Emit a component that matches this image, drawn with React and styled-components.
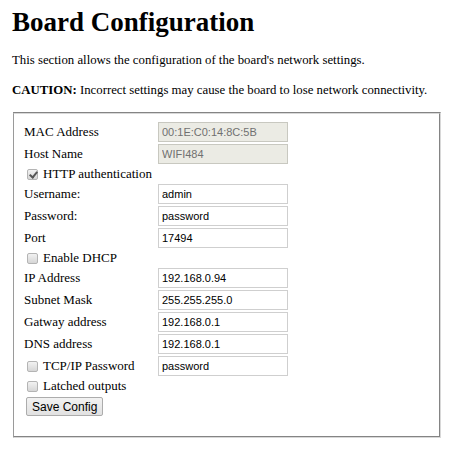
import styled, { createGlobalStyle } from 'styled-components';

const GlobalStyle = createGlobalStyle`
	body {
		margin: 0;
		background: #fff;
		color: #000;
		font-family: 'Liberation Serif', 'Times New Roman', serif;
		font-size: 13px;
	}
`;

const Page = styled.div`
	padding: 0 11px 0 12px;
`;

const Title = styled.h1`
	font-size: 27px;
	font-weight: bold;
	margin: 6px 0 0;
	line-height: 32px;
`;

const Text = styled.p`
	margin: 14px 0 0;
	font-size: 12.8px;
	line-height: 16px;

	& + & {
		margin-top: 14px;
	}
`;

const Fieldset = styled.fieldset`
	margin: 14px 0 0 1px;
	padding: 8px 10px 20px 10px;
	border: 2px groove #d8d8d8;
	border-left-width: 1px;
	border-left-style: solid;
	border-left-color: #9a9a9a;
`;

const Form = styled.div`
	display: grid;
	grid-template-columns: 134px 130px;
	row-gap: 2px;
	align-items: center;
`;

const Label = styled.label`
	line-height: 20px;
	white-space: nowrap;
`;

const Field = styled.input`
	box-sizing: border-box;
	width: 130px;
	height: 20px;
	padding: 0 3px;
	border: 1px solid ${(p) => (p.disabled ? '#c8c8c0' : '#cfcfcf')};
	background: ${(p) => (p.disabled ? '#ebebe4' : '#fff')};
	color: ${(p) => (p.disabled ? '#707070' : '#000')};
	font-family: 'Liberation Sans', Arial, sans-serif;
	font-size: 11px;
	outline: none;
`;

const CheckRow = styled.label`
	grid-column: ${(p) => (p.$span ? '1 / span 2' : 'auto')};
	display: flex;
	align-items: center;
	gap: 5px;
	padding-left: 3px;
	line-height: 16px;
	white-space: nowrap;
`;

const Box = styled.span`
	position: relative;
	width: 11px;
	height: 11px;
	box-sizing: border-box;
	border: 1px solid #b4b4b4;
	border-radius: 2px;
	background: linear-gradient(#f2f2f2, #d6d6d6);

	&::after {
		content: '';
		display: ${(p) => (p.$checked ? 'block' : 'none')};
		position: absolute;
		left: 3px;
		top: 0px;
		width: 3px;
		height: 6px;
		border: solid #555;
		border-width: 0 2px 2px 0;
		transform: rotate(40deg);
	}
`;

const Button = styled.button`
	grid-column: 1 / span 2;
	justify-self: start;
	margin: 1px 0 0 2px;
	height: 19px;
	padding: 0 5px;
	border: 1px solid #acacac;
	border-radius: 2px;
	background: linear-gradient(#f2f2f2, #e1e1e1);
	font-family: 'Liberation Sans', Arial, sans-serif;
	font-size: 12px;
	color: #000;
`;

function Check({ checked, children, span }) {
	return (
		<CheckRow $span={span}>
			<Box $checked={checked} />
			{children}
		</CheckRow>
	);
}

export default function App() {
	return (
		<>
			<GlobalStyle />
			<Page>
				<Title>Board Configuration</Title>
				<Text>This section allows the configuration of the board's network settings.</Text>
				<Text>
					<b>CAUTION:</b> Incorrect settings may cause the board to lose network connectivity.
				</Text>
				<Fieldset>
					<Form>
						<Label>MAC Address</Label>
						<Field disabled defaultValue="00:1E:C0:14:8C:5B" />
						<Label>Host Name</Label>
						<Field disabled defaultValue="WIFI484" />
						<Check checked span>HTTP authentication</Check>
						<Label>Username:</Label>
						<Field defaultValue="admin" />
						<Label>Password:</Label>
						<Field defaultValue="password" />
						<Label>Port</Label>
						<Field defaultValue="17494" />
						<Check span>Enable DHCP</Check>
						<Label>IP Address</Label>
						<Field defaultValue="192.168.0.94" />
						<Label>Subnet Mask</Label>
						<Field defaultValue="255.255.255.0" />
						<Label>Gatway address</Label>
						<Field defaultValue="192.168.0.1" />
						<Label>DNS address</Label>
						<Field defaultValue="192.168.0.1" />
						<Check>TCP/IP Password</Check>
						<Field defaultValue="password" />
						<Check span>Latched outputs</Check>
						<Button>Save Config</Button>
					</Form>
				</Fieldset>
			</Page>
		</>
	);
}
